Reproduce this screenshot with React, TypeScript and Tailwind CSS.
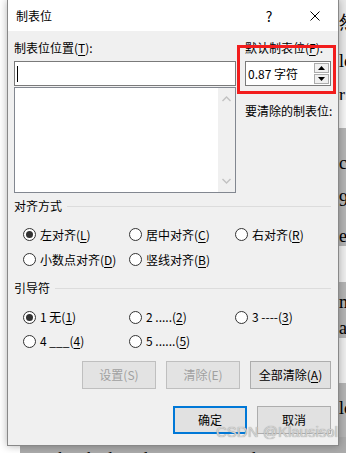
import React from "react";

const ui = "font-['Noto_Sans_CJK_SC',sans-serif]";

const docLines = [
  { h: 12, bg: "bg-[#e8e8e8]", t: "" },
  { h: 20, bg: "bg-[#e8e8e8]", t: "然" },
  { h: 19, bg: "bg-[#e8e8e8]", t: "" },
  { h: 20, bg: "bg-[#e8e8e8]", t: "lo" },
  { h: 19, bg: "bg-[#e8e8e8]", t: "" },
  { h: 10, bg: "bg-[#e8e8e8]", t: "r" },
  { h: 28, bg: "bg-[#f5f5f5]", t: "" },
  { h: 25, bg: "bg-[#b4b4b4]", t: "" },
  { h: 20, bg: "bg-[#b4b4b4]", t: "c" },
  { h: 17, bg: "bg-[#b4b4b4]", t: "" },
  { h: 20, bg: "bg-[#b4b4b4]", t: "9," },
  { h: 16, bg: "bg-[#b4b4b4]", t: "" },
  { h: 20, bg: "bg-[#b4b4b4]", t: "e" },
  { h: 36, bg: "bg-[#eeeeee]", t: "" },
  { h: 10, bg: "bg-[#b4b4b4]", t: "" },
  { h: 20, bg: "bg-[#b4b4b4]", t: "m" },
  { h: 6, bg: "bg-[#b4b4b4]", t: "" },
  { h: 20, bg: "bg-[#b4b4b4]", t: "ar" },
  { h: 45, bg: "bg-[#eeeeee]", t: "" },
  { h: 15, bg: "bg-[#b4b4b4]", t: "" },
  { h: 20, bg: "bg-[#b4b4b4]", t: "lc" },
  { h: 19, bg: "bg-[#b4b4b4]", t: "" },
];

function U({ children }: { children: React.ReactNode }) {
  return <span className="underline underline-offset-[2px]">{children}</span>;
}

function Radio({ checked, children }: { checked?: boolean; children: React.ReactNode }) {
  return (
    <div className="flex items-center gap-[4px]">
      <span className="flex h-[13px] w-[13px] items-center justify-center rounded-full border border-[#333333] bg-white">
        {checked && <span className="h-[7px] w-[7px] rounded-full bg-[#333333]" />}
      </span>
      <span className="whitespace-nowrap">{children}</span>
    </div>
  );
}

function GroupTitle({ children }: { children: React.ReactNode }) {
  return (
    <div className="flex h-4 items-center">
      <span>{children}</span>
      <div className="ml-[5px] h-px flex-1 bg-[#dcdcdc]" />
    </div>
  );
}

function Btn({
  children,
  disabled,
  primary,
  w = "w-[74px]",
}: {
  children: React.ReactNode;
  disabled?: boolean;
  primary?: boolean;
  w?: string;
}) {
  let cls = "border border-[#adadad] bg-[#e1e1e1] text-black";
  if (disabled) cls = "border border-[#bfbfbf] bg-[#e3e3e3] text-[#a0a0a0]";
  if (primary) cls = "border-2 border-[#0078d7] bg-[#e1e1e1] text-black";
  return (
    <div className={`flex h-[28px] items-center justify-center text-[12px] ${w} ${cls}`}>
      {children}
    </div>
  );
}

export default function App() {
  return (
    <div className="relative h-[453px] w-[346px] overflow-hidden bg-white">
      {/* document behind the dialog */}
      <div className="pl-[20px] font-['Liberation_Serif',serif] text-[18px] text-black">
        {docLines.map((l, i) => (
          <div
            key={i}
            className={`flex items-center overflow-hidden whitespace-nowrap pl-[319px] leading-[20px] ${l.bg}`}
            style={{ height: l.h }}
          >
            {l.t}
          </div>
        ))}
        <div className="flex h-[20px] items-start overflow-hidden whitespace-nowrap bg-[#ababab] pt-[12px] text-[17px] leading-[20px]">
          type than hydroxyl group arranged in compa
        </div>
      </div>

      {/* dialog */}
      <div
        className={`absolute left-[7px] top-0 w-[332px] border-x border-b border-[#888888] bg-[#f0f0f0] text-[12px] leading-4 text-black shadow-[0_0_8px_rgba(0,0,0,0.3)] ${ui}`}
      >
        <div className="flex h-[31px] items-center bg-white">
          <span className="pl-2 text-[12px]">制表位</span>
          <div className="ml-auto flex h-full">
            <div className="flex w-[46px] items-center justify-center text-[14px]">?</div>
            <div className="flex w-[46px] items-center justify-center">
              <svg width="10" height="10" viewBox="0 0 10 10">
                <path d="M0.5 0.5 L9.5 9.5 M9.5 0.5 L0.5 9.5" stroke="#000" strokeWidth="1" />
              </svg>
            </div>
          </div>
        </div>

        <div className="pb-[11px] pl-[6px] pr-[7px]">
          <div className="flex justify-between">
            <div className="w-[222px]">
              <div className="mt-[9px] h-4">
                制表位位置(<U>T</U>):
              </div>
              <div className="mt-[5px] flex h-[25px] items-center border border-[#7a7a7a] bg-white pl-[2px]">
                <div className="h-[16px] w-px bg-black" />
              </div>
              <div className="mt-px flex h-[106px] border border-[#828790] bg-white">
                <div className="flex-1" />
                <div className="flex w-[17px] flex-col items-center justify-between bg-[#f0f0f0] py-[8px]">
                  <svg width="9" height="6" viewBox="0 0 9 6">
                    <path d="M0.5 5 L4.5 1 L8.5 5" stroke="#c2c2c2" strokeWidth="1.4" fill="none" />
                  </svg>
                  <svg width="9" height="6" viewBox="0 0 9 6">
                    <path d="M0.5 1 L4.5 5 L8.5 1" stroke="#c2c2c2" strokeWidth="1.4" fill="none" />
                  </svg>
                </div>
              </div>
            </div>

            <div className="w-[86px]">
              <div className="mt-[9px] h-4 whitespace-nowrap">
                默认制表位(<U>F</U>):
              </div>
              <div className="mt-[5px] flex h-[25px] items-center border border-[#7a7a7a] bg-white">
                <span className="pl-[2px]">0.87 字符</span>
                <div className="ml-auto mr-px flex flex-col gap-px">
                  <div className="flex h-[10px] w-[15px] items-center justify-center border border-[#acacac] bg-[#f0f0f0]">
                    <svg width="7" height="4" viewBox="0 0 7 4">
                      <path d="M0 4 L3.5 0 L7 4 Z" fill="#000" />
                    </svg>
                  </div>
                  <div className="flex h-[10px] w-[15px] items-center justify-center border border-[#acacac] bg-[#f0f0f0]">
                    <svg width="7" height="4" viewBox="0 0 7 4">
                      <path d="M0 0 L7 0 L3.5 4 Z" fill="#000" />
                    </svg>
                  </div>
                </div>
              </div>
              <div className="mt-[17px] h-4 whitespace-nowrap">要清除的制表位:</div>
            </div>
          </div>

          <div className="mt-[5px]">
            <GroupTitle>对齐方式</GroupTitle>
          </div>
          <div className="mt-[8px] grid grid-cols-[106px_106px_1fr] pl-[9px]">
            <div className="flex h-[25px] items-center">
              <Radio checked>
                左对齐(<U>L</U>)
              </Radio>
            </div>
            <div className="flex h-[25px] items-center">
              <Radio>
                居中对齐(<U>C</U>)
              </Radio>
            </div>
            <div className="flex h-[25px] items-center">
              <Radio>
                右对齐(<U>R</U>)
              </Radio>
            </div>
            <div className="flex h-[25px] items-center">
              <Radio>
                小数点对齐(<U>D</U>)
              </Radio>
            </div>
            <div className="flex h-[25px] items-center">
              <Radio>
                竖线对齐(<U>B</U>)
              </Radio>
            </div>
          </div>

          <div className="mt-[8px]">
            <GroupTitle>引导符</GroupTitle>
          </div>
          <div className="mt-[9px] grid grid-cols-[106px_106px_1fr] pl-[9px]">
            <div className="flex h-6 items-center">
              <Radio checked>
                1 无(<U>1</U>)
              </Radio>
            </div>
            <div className="flex h-6 items-center">
              <Radio>
                2 .....(<U>2</U>)
              </Radio>
            </div>
            <div className="flex h-6 items-center">
              <Radio>
                3 ----(<U>3</U>)
              </Radio>
            </div>
            <div className="flex h-6 items-center">
              <Radio>
                4 ___(<U>4</U>)
              </Radio>
            </div>
            <div className="flex h-6 items-center">
              <Radio>
                5 ......(<U>5</U>)
              </Radio>
            </div>
          </div>

          <div className="mt-[8px] flex justify-end gap-[10px]">
            <Btn disabled>设置(S)</Btn>
            <Btn disabled>清除(E)</Btn>
            <Btn w="w-[81px]">
              全部清除(<U>A</U>)
            </Btn>
          </div>

          <div className="mt-[17px] flex justify-end gap-[10px]">
            <Btn primary>确定</Btn>
            <Btn>取消</Btn>
          </div>
        </div>
      </div>

      {/* red annotation box */}
      <div className="absolute left-[237px] top-[45px] h-[49px] w-[99px] border-[3px] border-[#f21d1d]" />

      {/* watermark */}
      <div className="absolute left-[216px] top-[423px] font-['Liberation_Sans',sans-serif] text-[15px] leading-[18px] text-[#d2d2d2] [text-shadow:0_0_1px_#8a8a8a]">
        CSDN @Klausisol
      </div>
    </div>
  );
}
